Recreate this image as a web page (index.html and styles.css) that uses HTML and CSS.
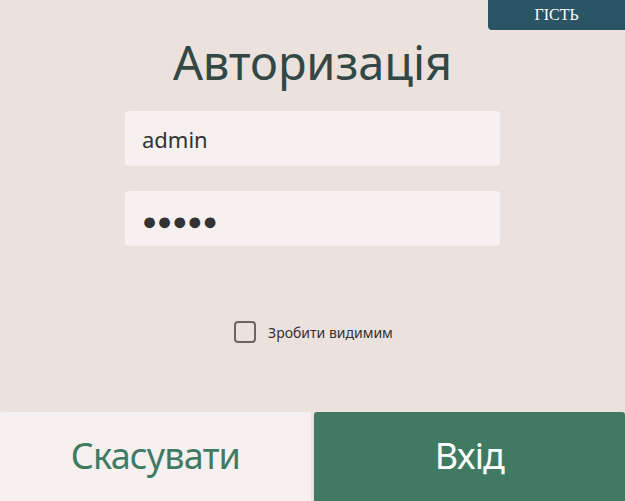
FILE: index.html
```html
<!DOCTYPE html>
<html lang="uk">
<head>
<meta charset="utf-8">
<link rel="stylesheet" href="styles.css">
</head>
<body>
<div class="page">
  <div class="badge">ГІСТЬ</div>
  <main class="form">
    <h1 class="title">Авторизація</h1>
    <div class="field">admin</div>
    <div class="field dots">●●●●●</div>
    <label class="check"><span class="box"></span><span>Зробити видимим</span></label>
  </main>
  <div class="actions">
    <div class="btn cancel">Скасувати</div>
    <div class="btn ok">Вхід</div>
  </div>
</div>
</body>
</html>
```
FILE: styles.css
```css
* { box-sizing: border-box; }
html, body { margin: 0; padding: 0; }
body {
  width: 625px;
  height: 501px;
  background: #ebe2dd;
  font-family: "Noto Sans", "Open Sans", sans-serif;
  overflow: hidden;
}
.page {
  position: relative;
  height: 501px;
  display: flex;
  flex-direction: column;
}
.badge {
  position: absolute;
  top: 0;
  right: 0;
  width: 137px;
  height: 30px;
  background: #2a5565;
  color: #fff;
  font-family: "Liberation Serif", serif;
  font-size: 16px;
  display: flex;
  align-items: center;
  justify-content: center;
  border-bottom-left-radius: 4px;
}
.form {
  flex: 1;
  display: flex;
  flex-direction: column;
  align-items: center;
}
.title {
  margin: 28px 0 0;
  height: 83px;
  font-weight: 400;
  font-size: 47px;
  line-height: 68px;
  color: #334845;
  letter-spacing: -0.1px;
}
.field {
  width: 375px;
  height: 55px;
  background: #f6f0f1;
  border-radius: 4px;
  padding-left: 17px;
  display: flex;
  align-items: center;
  font-size: 22px;
  color: #333;
  margin-bottom: 25px;
}
.dots {
  font-size: 25px;
  color: #333;
  padding-top: 2px;
}
.check {
  margin-top: 50px;
  display: flex;
  align-items: center;
  gap: 12px;
  font-size: 14px;
  color: #333;
  margin-left: 2px;
}
.box {
  width: 22px;
  height: 22px;
  border: 2.5px solid #6b6664;
  border-radius: 4px;
}
.actions {
  height: 89px;
  display: flex;
  gap: 3px;
}
.btn {
  flex: 1;
  display: flex;
  align-items: center;
  justify-content: center;
  font-size: 36px;
  letter-spacing: -0.8px;
  border-radius: 3px 3px 0 0;
  padding-bottom: 2px;
}
.cancel {
  background: #f6f0f1;
  color: #3f7a62;
}
.ok {
  background: #407a62;
  color: #fff;
}
```
